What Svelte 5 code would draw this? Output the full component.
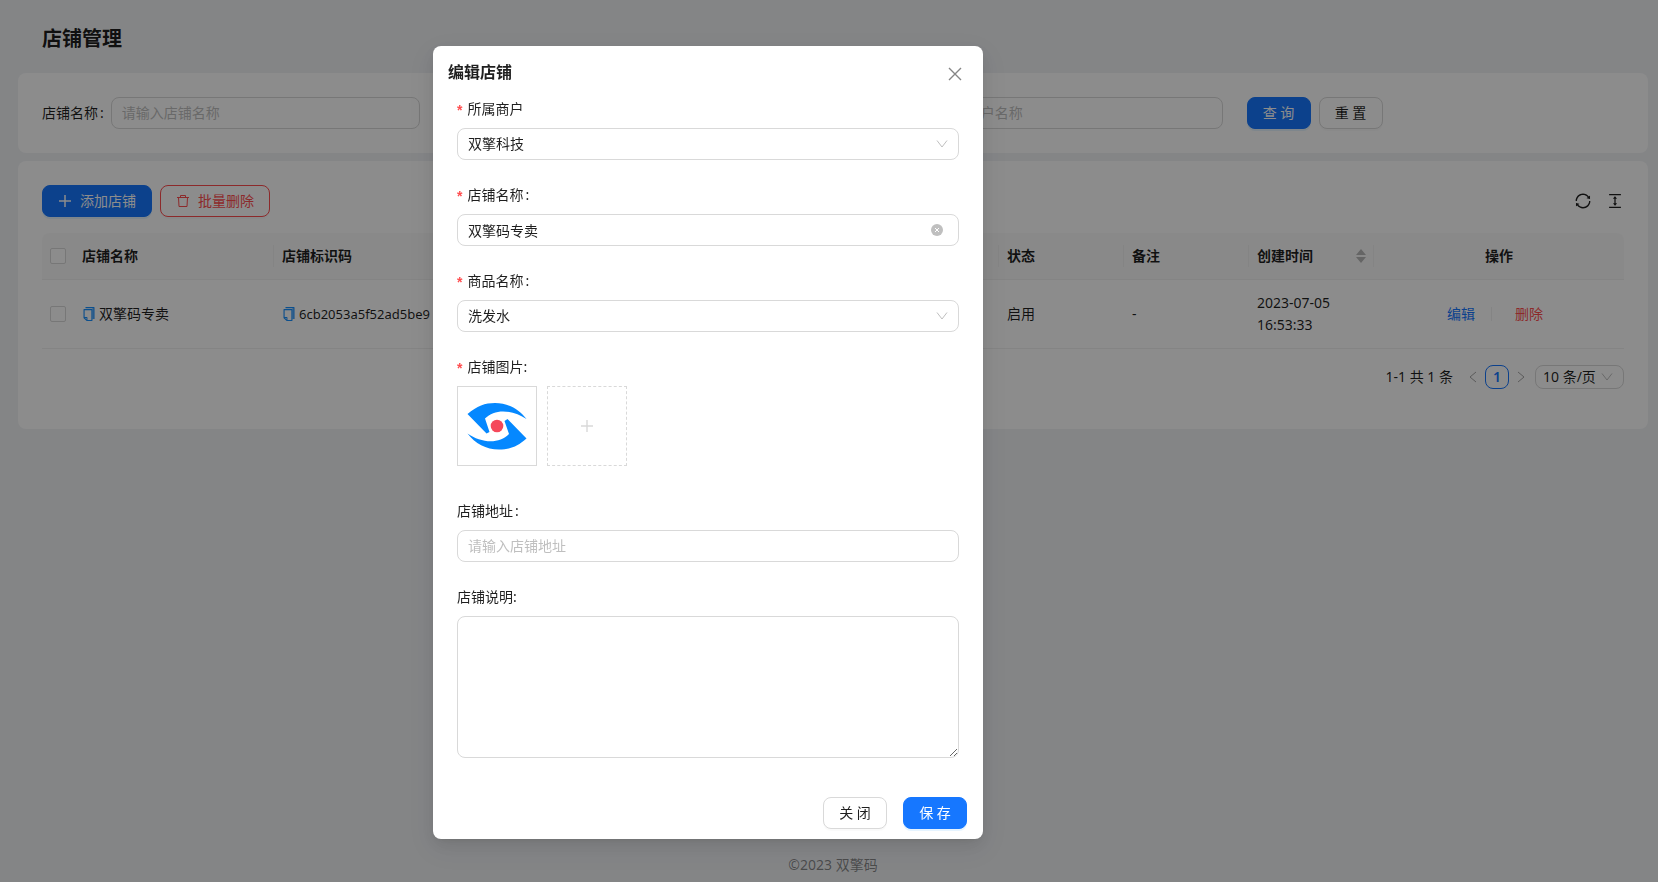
<script>
	let shopName = "双擎码专卖";
	let address = "";
	let remark = "";
	let open = true;

	const filters = [
		{ id: "q-shop", label: "店铺名称", placeholder: "请输入店铺名称" },
		{ id: "q-merchant", label: "商户名称", placeholder: "请输入商户名称" },
	];

	let shops = [
		{
			name: "双擎码专卖",
			code: "6cb2053a5f52ad5be9",
			status: "启用",
			remark: "-",
			date: "2023-07-05",
			time: "16:53:33",
		},
	];

	function close() {
		open = false;
	}
</script>

{#snippet copyIcon()}
	<svg class="copy" viewBox="0 0 1024 1024" width="16" height="16" aria-hidden="true">
		<path class="tint" d="M704 136h128v688H704z" />
		<path d="M832 64H296c-4 0-8 4-8 8v56c0 4 4 8 8 8h496v688c0 4 4 8 8 8h56c4 0 8-4 8-8V96c0-18-14-32-32-32z" />
		<path d="M704 192H192c-18 0-32 14-32 32v531c0 8 3 16 9 22l174 174c6 6 14 9 22 9h339c18 0 32-14 32-32V224c0-18-14-32-32-32zM350 856l-86-86h86zm314 32H414V746c0-22-18-40-40-40H232V264h432z" />
	</svg>
{/snippet}

{#snippet chevron()}
	<svg class="chevron" viewBox="0 0 12 12" width="12" height="12" aria-hidden="true">
		<path d="M1 2.5 6 9l5-6.5" />
	</svg>
{/snippet}

<div class="page">
	<h1>店铺管理</h1>

	<form class="card search">
		{#each filters as f}
			<div class="filter">
				<label for={f.id}>{f.label}<span class="colon">:</span></label>
				<input class="control" type="text" id={f.id} placeholder={f.placeholder} />
			</div>
		{/each}
		<div class="actions">
			<button type="button" class="btn primary">查 询</button>
			<button type="button" class="btn">重 置</button>
		</div>
	</form>

	<section class="card">
		<div class="toolbar">
			<button class="btn primary">
				<svg viewBox="0 0 14 14" width="14" height="14" stroke-width="1.5" aria-hidden="true"><path d="M7 1v12M1 7h12" /></svg>
				添加店铺
			</button>
			<button class="btn danger">
				<svg viewBox="0 0 14 14" width="14" height="14" aria-hidden="true"><path d="M1 3.500h12M4.500 3.500v-2h5v2M2.500 3.500l.5 9h8l.5-9" /></svg>
				批量删除
			</button>
			<div class="tools">
				<button class="icon" aria-label="刷新">
					<svg viewBox="0 0 1024 1024" width="18" height="18" aria-hidden="true">
						<path d="M168 504.200c1-43.700 10-86.100 26.900-126 17.300-41 42.100-77.700 73.700-109.400S337 212.300 378 195c42.400-17.900 87.400-27 133.900-27s91.500 9.100 133.800 27A341.500 341.500 0 0 1 755 268.800c9.900 9.900 19.200 20.400 27.800 31.400l-60.200 47a8 8 0 0 0 3 14.100l175.700 43c5 1.200 9.900-2.600 9.900-7.700l.8-180.900c0-6.700-7.700-10.500-12.900-6.300l-56.400 44.100C765.800 155.100 646.200 92 511.800 92 282.700 92 96.300 275.600 92 503.800a8 8 0 0 0 8 8.200h60c4.400 0 7.900-3.500 8-7.800zm756 7.800h-60c-4.400 0-7.900 3.500-8 7.800-1 43.700-10 86.100-26.900 126-17.300 41-42.100 77.800-73.700 109.400A342.450 342.450 0 0 1 512.100 856a342.240 342.240 0 0 1-243.200-100.800c-9.900-9.900-19.200-20.400-27.800-31.400l60.200-47a8 8 0 0 0-3-14.100l-175.700-43c-5-1.200-9.900 2.600-9.900 7.700l-.7 181c0 6.700 7.700 10.500 12.900 6.300l56.400-44.100C258.200 868.900 377.800 932 512.200 932c229.200 0 415.500-183.700 419.800-411.800a8 8 0 0 0-8-8.200z" />
					</svg>
				</button>
				<button class="icon" aria-label="密度">
					<svg viewBox="0 0 1024 1024" width="18" height="18" aria-hidden="true">
						<path d="M840 836H184c-4.400 0-8 3.600-8 8v60c0 4.400 3.600 8 8 8h656c4.400 0 8-3.600 8-8v-60c0-4.400-3.600-8-8-8zm0-724H184c-4.400 0-8 3.600-8 8v60c0 4.400 3.600 8 8 8h656c4.400 0 8-3.600 8-8v-60c0-4.400-3.600-8-8-8zM610.800 378c6 0 9.400-7 5.700-11.700L515.700 238.700a7.140 7.140 0 0 0-11.300 0L403.600 366.300a7.230 7.230 0 0 0 5.700 11.700H476v268h-62.800c-6 0-9.400 7-5.700 11.700l100.800 127.500c2.900 3.700 8.500 3.700 11.300 0l100.800-127.500c3.700-4.700.4-11.700-5.700-11.700H548V378h62.800z" />
					</svg>
				</button>
			</div>
		</div>

		<table>
			<thead>
				<tr>
					<th class="check"><input type="checkbox" aria-label="全选" /></th>
					<th class="name">店铺名称</th>
					<th>店铺标识码</th>
					<th class="short">状态</th>
					<th class="short">备注</th>
					<th class="short">
						<div class="sortable">
							创建时间
							<svg viewBox="0 0 10 14" width="10" height="14" aria-hidden="true"><path d="M5 0l5 6H0zM5 14l5-6H0z" /></svg>
						</div>
					</th>
					<th class="ops">操作</th>
				</tr>
			</thead>
			<tbody>
				{#each shops as shop}
					<tr>
						<td class="check"><input type="checkbox" aria-label={shop.name} /></td>
						<td>{@render copyIcon()}{shop.name}</td>
						<td class="code">{@render copyIcon()}{shop.code}</td>
						<td>{shop.status}</td>
						<td>{shop.remark}</td>
						<td>{shop.date}<br />{shop.time}</td>
						<td>
							<div class="links">
								<a href="#edit">编辑</a>
								<a href="#delete" class="del">删除</a>
							</div>
						</td>
					</tr>
				{/each}
			</tbody>
		</table>

		<nav class="pagination">
			<span class="total">1-1 共 1 条</span>
			<button class="arrow" aria-label="上一页">
				<svg viewBox="0 0 12 12" width="12" height="12" aria-hidden="true"><path d="M9 1 3 6l6 5" /></svg>
			</button>
			<button class="current">1</button>
			<button class="arrow" aria-label="下一页">
				<svg viewBox="0 0 12 12" width="12" height="12" aria-hidden="true"><path d="m3 1 6 5-6 5" /></svg>
			</button>
			<div class="select size">
				<select aria-label="每页条数"><option>10 条/页</option></select>
				{@render chevron()}
			</div>
		</nav>
	</section>

	<footer>©2023 双擎码</footer>
</div>

{#if open}
	<div class="mask">
		<div class="modal" role="dialog" aria-labelledby="modal-title">
			<header>
				<h2 id="modal-title">编辑店铺</h2>
				<button class="icon close" aria-label="关闭" on:click={close}>
					<svg viewBox="0 0 16 16" width="16" height="16" stroke-width="1.4" aria-hidden="true"><path d="m2 2 12 12M14 2 2 14" /></svg>
				</button>
			</header>

			<form>
				<div class="item">
					<label for="merchant" class="required">所属商户</label>
					<div class="select">
						<select class="control" id="merchant"><option>双擎科技</option></select>
						{@render chevron()}
					</div>
				</div>
				<div class="item">
					<label for="shop" class="required">店铺名称<span class="colon">:</span></label>
					<div class="select">
						<input class="control" type="text" id="shop" bind:value={shopName} />
						<button type="button" class="icon clear" aria-label="清空" on:click={() => (shopName = "")}>
							<svg viewBox="0 0 12 12" width="12" height="12" aria-hidden="true"><circle cx="6" cy="6" r="6" /><path d="m4 4 4 4M8 4 4 8" /></svg>
						</button>
					</div>
				</div>
				<div class="item">
					<label for="product" class="required">商品名称<span class="colon">:</span></label>
					<div class="select">
						<select class="control" id="product"><option>洗发水</option></select>
						{@render chevron()}
					</div>
				</div>
				<div class="item">
					<span class="label required">店铺图片:</span>
					<div class="pictures">
						<div class="picture">
							<svg viewBox="1 1 78 78" width="78" height="78" role="img" aria-label="店铺图片">
								<path class="eye" d="M10.500 28C20 20 28 17 38 17c13 0 24 6 31.500 16C56 24 38 22 28 32.500l4.500 13.500-3 1.500z" />
								<path class="eye" d="M69.500 52.500C60 61 52 63.500 42 63.500c-13 0-24-6-31.500-16C24 57 42 58.500 52 48l-4.500-13 3-2z" />
								<circle cx="40" cy="40" r="6.300" />
							</svg>
						</div>
						<button type="button" class="add" aria-label="上传图片">
							<svg viewBox="0 0 12 12" width="12" height="12" stroke-width="1.4" aria-hidden="true"><path d="M6 0v12M0 6h12" /></svg>
						</button>
					</div>
				</div>
				<div class="item">
					<label for="address">店铺地址<span class="colon">:</span></label>
					<input class="control" type="text" id="address" placeholder="请输入店铺地址" bind:value={address} />
				</div>
				<div class="item">
					<label for="remark">店铺说明:</label>
					<textarea class="control" id="remark" bind:value={remark}></textarea>
				</div>
			</form>

			<div class="buttons">
				<button class="btn" on:click={close}>关 闭</button>
				<button class="btn primary">保 存</button>
			</div>
		</div>
	</div>
{/if}

<style>
	:global(body) {
		background: #f0f2f5;
		color: rgba(0, 0, 0, 0.88);
		font: 14px/22px "Noto Sans", "Noto Sans CJK SC", sans-serif;
	}

	* {
		box-sizing: border-box;
	}

	button,
	input,
	select,
	textarea {
		font: inherit;
		color: inherit;
		margin: 0;
	}

	svg {
		flex: none;
		fill: none;
		stroke: currentColor;
	}

	h1 {
		margin: 0;
		padding: 25px 24px 20px;
		font-size: 20px;
		line-height: 28px;
		font-weight: 600;
	}

	.page {
		padding: 0 10px 0 18px;
	}

	.card {
		background: #fff;
		border-radius: 8px;
		padding: 24px;
		margin-bottom: 8px;
	}

	.search {
		display: grid;
		grid-template-columns: repeat(4, 1fr);
		column-gap: 24px;
	}

	.filter {
		display: flex;
		align-items: center;
	}

	.filter:nth-child(2) {
		grid-column: 3;
	}

	.filter label {
		flex: none;
		margin-right: 7px;
	}

	.colon {
		margin-left: 2px;
	}

	.control {
		display: block;
		width: 100%;
		min-width: 0;
		height: 32px;
		padding: 0 10px 1px;
		border: 1px solid #d9d9d9;
		border-radius: 8px;
		background: #fff;
		outline: none;
	}

	.control::placeholder {
		color: #bfbfbf;
		opacity: 1;
	}

	.actions,
	.toolbar {
		display: flex;
		gap: 8px;
	}

	.btn {
		display: flex;
		align-items: center;
		justify-content: center;
		gap: 8px;
		min-width: 64px;
		height: 32px;
		padding: 0 15px;
		border: 1px solid #d9d9d9;
		border-radius: 8px;
		background: #fff;
		box-shadow: 0 2px 0 rgba(0, 0, 0, 0.02);
		white-space: nowrap;
	}

	.btn.primary {
		border-color: #1677ff;
		background: #1677ff;
		color: #fff;
		box-shadow: 0 2px 0 rgba(5, 145, 255, 0.1);
	}

	.btn.danger {
		border-color: #ff4d4f;
		color: #ff4d4f;
	}

	.tools {
		display: flex;
		gap: 14px;
		margin-left: auto;
	}

	.icon {
		display: flex;
		align-items: center;
		padding: 0;
		border: 0;
		background: none;
	}

	.tools svg {
		fill: currentColor;
		stroke: none;
	}

	table {
		width: 100%;
		margin-top: 16px;
		table-layout: fixed;
		border-collapse: separate;
		border-spacing: 0;
	}

	th,
	td {
		padding: 12px 8px;
		border-bottom: 1px solid #f0f0f0;
		text-align: left;
	}

	th {
		position: relative;
		background: #fafafa;
		font-weight: 600;
	}

	th:first-child {
		border-top-left-radius: 8px;
	}

	th:last-child {
		border-top-right-radius: 8px;
	}

	th:not(:first-child):not(:last-child)::after {
		content: "";
		position: absolute;
		top: 12px;
		right: 0;
		width: 1px;
		height: 22px;
		background: #f0f0f0;
	}

	.check {
		width: 32px;
	}

	.name {
		width: 200px;
	}

	.short {
		width: 125px;
	}

	.ops {
		width: 250px;
		text-align: center;
	}

	.code {
		font-size: 13px;
	}

	input[type="checkbox"] {
		display: block;
		appearance: none;
		width: 16px;
		height: 16px;
		border: 1px solid #d9d9d9;
		border-radius: 2px;
		background: #fff;
	}

	.copy {
		margin: 0 2px 0 -1px;
		vertical-align: -3px;
		fill: #1890ff;
		stroke: none;
	}

	.copy .tint {
		fill: #91caff;
	}

	.sortable {
		display: flex;
		align-items: center;
		justify-content: space-between;
	}

	.sortable svg {
		fill: #b8b8b8;
		stroke: none;
	}

	.links {
		display: flex;
		justify-content: center;
		align-items: center;
		padding-right: 8px;
	}

	a {
		color: #1677ff;
		text-decoration: none;
		padding-right: 16px;
	}

	a.del {
		color: #ff4d4f;
		padding: 0 0 0 24px;
		background: linear-gradient(#f0f0f0, #f0f0f0) 0 50% / 1px 14px no-repeat;
	}

	.pagination {
		display: flex;
		justify-content: flex-end;
		align-items: center;
		height: 24px;
		margin: 16px 0;
	}

	.total {
		margin-right: 8px;
	}

	.pagination button {
		display: flex;
		align-items: center;
		justify-content: center;
		width: 24px;
		height: 24px;
		padding: 0;
		border: 0;
		background: none;
	}

	.arrow {
		color: #a6a6a6;
	}

	.pagination .current {
		border: 1px solid #1677ff;
		border-radius: 8px;
		color: #1677ff;
		font-weight: 600;
	}

	.select {
		position: relative;
	}

	select {
		appearance: none;
	}

	.size {
		margin-left: 2px;
	}

	.size select {
		display: block;
		width: 89px;
		height: 24px;
		padding: 0 7px;
		border: 1px solid #d9d9d9;
		border-radius: 8px;
		background: #fff;
	}

	.chevron {
		position: absolute;
		top: calc(50% - 6px);
		right: 11px;
		color: #bfbfbf;
		pointer-events: none;
	}

	footer {
		padding: 417px 0 6px;
		text-align: center;
		color: rgba(0, 0, 0, 0.45);
	}

	.mask {
		position: fixed;
		inset: 0;
		overflow: auto;
		background: rgba(0, 0, 0, 0.45);
	}

	.modal {
		width: 550px;
		margin: 46px 0 0 calc(50% - 396px);
		padding-bottom: 10px;
		border-radius: 8px;
		background: #fff;
		box-shadow:
			0 6px 16px 0 rgba(0, 0, 0, 0.08),
			0 3px 6px -4px rgba(0, 0, 0, 0.12),
			0 9px 28px 8px rgba(0, 0, 0, 0.05);
	}

	header {
		display: flex;
		align-items: flex-end;
		justify-content: space-between;
		padding: 14px 20px 14px 15px;
	}

	h2 {
		margin: 0;
		font-size: 16px;
		line-height: 24px;
		font-weight: 600;
	}

	.close {
		padding-bottom: 2px;
		color: #858585;
	}

	.modal form {
		padding: 0 24px;
	}

	.item {
		margin-bottom: 24px;
	}

	.item label,
	.label {
		display: flex;
		margin-bottom: 8px;
	}

	.required::before {
		content: "*";
		margin: 1px 5px -1px 0;
		color: #ff4d4f;
		font-family: "Liberation Sans", sans-serif;
		font-weight: 600;
	}

	.clear {
		position: absolute;
		top: 10px;
		right: 16px;
	}

	.clear circle {
		fill: #bfbfbf;
		stroke: none;
	}

	.clear path {
		stroke: #fff;
	}

	.pictures {
		display: flex;
		gap: 10px;
		padding-bottom: 10px;
	}

	.picture,
	.add {
		display: flex;
		align-items: center;
		justify-content: center;
		width: 80px;
		height: 80px;
		padding: 0;
		border: 1px solid #d9d9d9;
		background: #fff;
	}

	.add {
		border-style: dashed;
		color: #d9d9d9;
	}

	.picture svg {
		fill: #f5485b;
		stroke: none;
	}

	.picture .eye {
		fill: #0588ff;
	}

	textarea.control {
		height: 142px;
		padding: 4px 11px;
		resize: vertical;
	}

	.buttons {
		display: flex;
		justify-content: flex-end;
		gap: 16px;
		padding: 15px 16px 0;
	}
</style>
